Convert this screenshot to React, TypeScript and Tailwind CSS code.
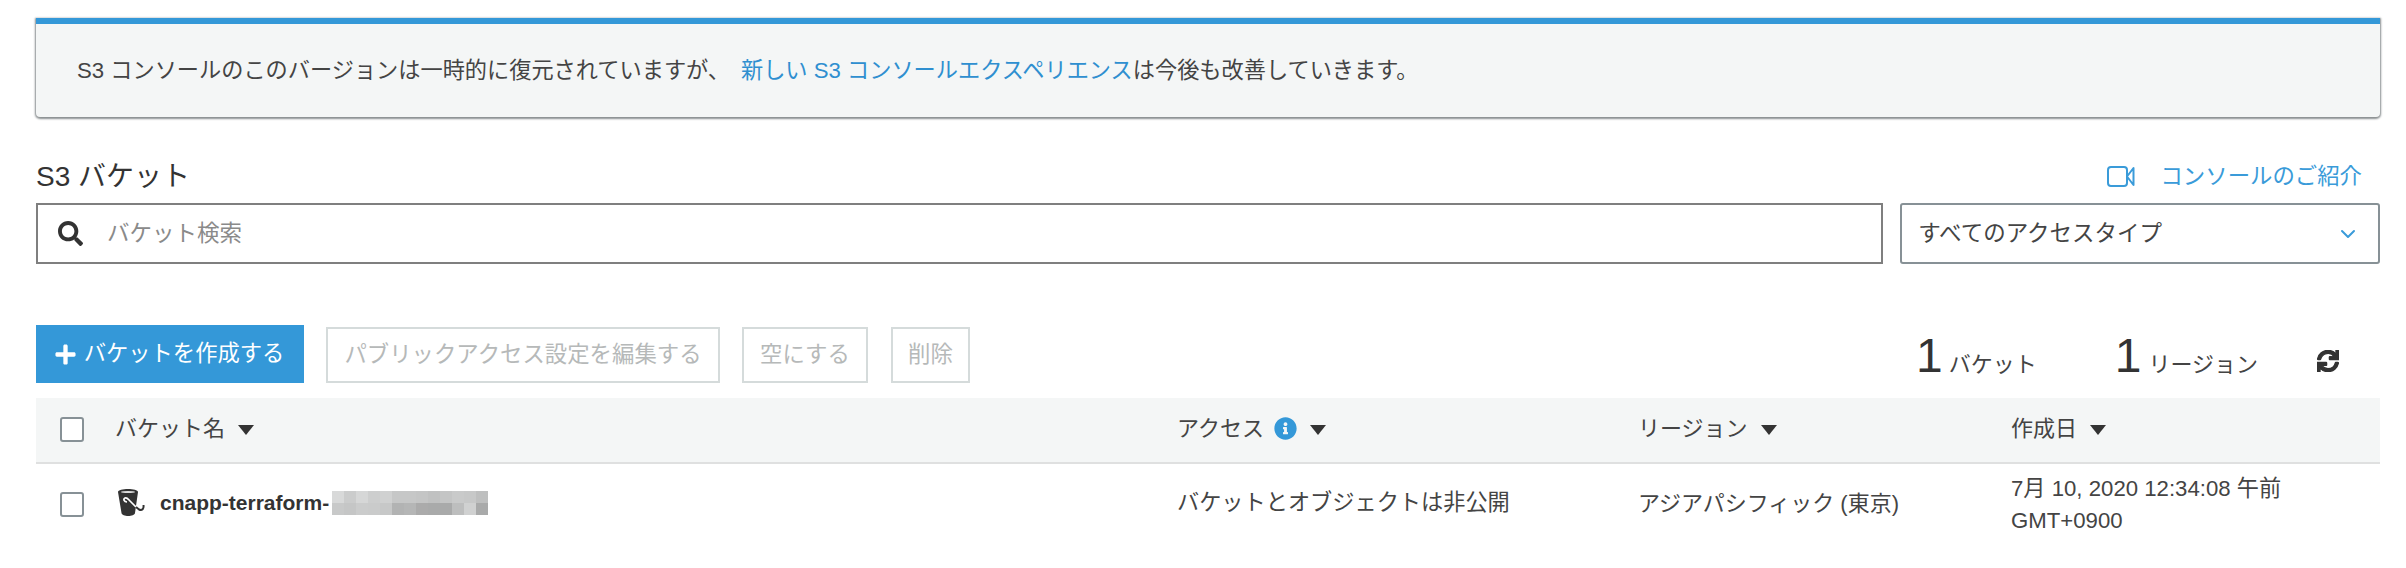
import { FaSearch, FaPlus, FaSync, FaInfoCircle } from "react-icons/fa";
import { LuChevronDown } from "react-icons/lu";

const blurTop = ["#d8d9d9", "#cbcccc", "#d6d7d7", "#cdcece", "#d0d1d1", "#c6c7c7", "#c6c7c7", "#c4c5c5", "#c0c1c1", "#c4c5c5", "#c9caca", "#c7c8c8", "#bebfbf"];
const blurBottom = ["#c8c9c9", "#c5c6c6", "#cbcccc", "#cacbcb", "#c7c8c8", "#b2b3b3", "#b5b6b6", "#ababab", "#a9aaaa", "#a9aaaa", "#bdbebe", "#d0d1d1", "#a9aaaa"];

function Caret() {
  return (
    <svg width="16" height="10" viewBox="0 0 16 10" className="shrink-0 mt-[3px]">
      <path d="M0 0 H16 L8 10 Z" fill="#333" />
    </svg>
  );
}

function Checkbox() {
  return <span className="block w-[24px] h-[25px] bg-white border-2 border-[#879196] rounded-[3px] mt-[2px]" />;
}

function BucketIcon() {
  return (
    <svg width="27" height="28" viewBox="0 0 27 28" className="block">
      <path d="M0 3 C0 -1 20 -1 20 3 L17 24 C16.500 28 4 28 3.500 24 Z" fill="#333" />
      <ellipse cx="10" cy="3" rx="7" ry="1" fill="#ddd" />
      <path d="M9 13 C6 13 5 10 7 9 C9 8 10 10 12 12 L18 18" fill="none" stroke="#fff" strokeWidth="1.700" />
      <path d="M18 18 L21 20.500 C24 22 26 20 25.500 16" fill="none" stroke="#333" strokeWidth="2" />
    </svg>
  );
}

function CameraIcon() {
  return (
    <svg width="28" height="21" viewBox="0 0 28 21" fill="none" stroke="#3a9bd9" strokeWidth="2" className="shrink-0">
      <rect x="1" y="1" width="19" height="19" rx="3" />
      <path d="M20 10.500 L26.500 2 V19 Z" strokeLinejoin="round" />
    </svg>
  );
}

export default function App() {
  return (
    <div className="w-[2406px] h-[568px] overflow-hidden bg-white pt-[18px] pl-[36px] pr-[26px] text-[#444] text-[22px] font-['Liberation_Sans','Noto_Sans_CJK_JP',sans-serif]">
      <section className="h-[99px] flex items-center pl-[41px] bg-[#f4f6f6] border-t-[6px] border-[#3498d8] rounded-b-[4px] shadow-[0_1px_2px_1px_#8a8f91]">
        <p className="text-[22.200px]">
          S3 コンソールのこのバージョンは一時的に復元されていますが、
          <a className="text-[#2f8fd0] ml-[11px]">新しい S3 コンソールエクスペリエンス</a>
          は今後も改善していきます。
        </p>
      </section>

      <div className="flex items-center justify-between mt-[37px] mb-[3px] h-[46px]">
        <h1 className="text-[28px] text-[#333]">S3 バケット</h1>
        <a className="flex items-center gap-[25px] text-[22.400px] text-[#3a9bd9] pr-[18px]">
          <CameraIcon />
          コンソールのご紹介
        </a>
      </div>

      <div className="flex gap-[17px] h-[61px]">
        <div className="w-[1848px] flex items-center gap-[24px] pl-[20px] border-2 border-[#7f7f7f]">
          <FaSearch className="text-[25px] text-[#333]" />
          <span className="text-[#8a8a8a] text-[22.500px]">バケット検索</span>
        </div>
        <div className="w-[480px] flex items-center justify-between pl-[16px] pr-[18px] border-2 border-[#879196] rounded-[3px]">
          <span className="text-[22.500px]">すべてのアクセスタイプ</span>
          <LuChevronDown className="text-[24px] text-[#3a9bd9]" />
        </div>
      </div>

      <div className="flex items-end mt-[61px] h-[58px]">
        <button className="w-[268px] h-[58px] flex items-center justify-center gap-[7px] bg-[#3498d8] text-white text-[22.300px]">
          <FaPlus className="text-[23px] -ml-[2px]" />
          バケットを作成する
        </button>
        <button className="ml-[22px] w-[394px] h-[56px] border-2 border-[#d5dbdb] text-[#b6b9b9] text-[22.400px]">パブリックアクセス設定を編集する</button>
        <button className="ml-[22px] w-[126px] h-[56px] border-2 border-[#d5dbdb] text-[#b6b9b9] text-[22.400px]">空にする</button>
        <button className="ml-[23px] w-[79px] h-[56px] border-2 border-[#d5dbdb] text-[#b6b9b9] text-[22.400px]">削除</button>
        <div className="ml-auto flex items-end text-[#444] pb-[4px]">
          <span className="text-[48px] leading-[46px] text-[#333]">1</span>
          <span className="ml-[6px] text-[22px] leading-[28px]">バケット</span>
          <span className="ml-[78px] text-[48px] leading-[46px] text-[#333]">1</span>
          <span className="ml-[7px] text-[22px] leading-[28px]">リージョン</span>
          <FaSync stroke="currentColor" strokeWidth={30} className="ml-[59px] mr-[41px] mb-[7px] text-[22px] text-[#333]" />
        </div>
      </div>

      <div className="mt-[15px] pb-[4px] grid grid-cols-[1141px_461px_373px_1fr] bg-[#f4f6f6] h-[66px] border-b-2 border-[#dfe0e0] items-center">
        <div className="flex items-center pl-[24px]">
          <Checkbox />
          <span className="ml-[31px]">バケット名</span>
          <span className="ml-[13px]"><Caret /></span>
        </div>
        <div className="flex items-center gap-[10px]">
          アクセス
          <FaInfoCircle className="text-[23px] text-[#3498d8]" />
          <span className="ml-[3px]"><Caret /></span>
        </div>
        <div className="flex items-center gap-[13px]">
          リージョン
          <Caret />
        </div>
        <div className="flex items-center gap-[13px]">
          作成日
          <Caret />
        </div>
      </div>

      <div className="grid grid-cols-[1141px_461px_373px_1fr] h-[82px] pb-[4px] items-center">
        <div className="flex items-center pl-[24px]">
          <Checkbox />
          <span className="ml-[34px]"><BucketIcon /></span>
          <span className="ml-[15px] font-bold text-[21px] text-[#333]">cnapp-terraform-</span>
          <div className="ml-[3px] grid grid-cols-[repeat(13,12px)] grid-rows-[12px_12px]">
            {[...blurTop, ...blurBottom].map((c, i) => (
              <span key={i} style={{ backgroundColor: c }} />
            ))}
          </div>
        </div>
        <div className="text-[22.200px]">バケットとオブジェクトは非公開</div>
        <div>アジアパシフィック (東京)</div>
        <div className="text-[22.200px] leading-[32px] w-[340px] mt-[4px]">7月 10, 2020 12:34:08 午前 GMT+0900</div>
      </div>
    </div>
  );
}
